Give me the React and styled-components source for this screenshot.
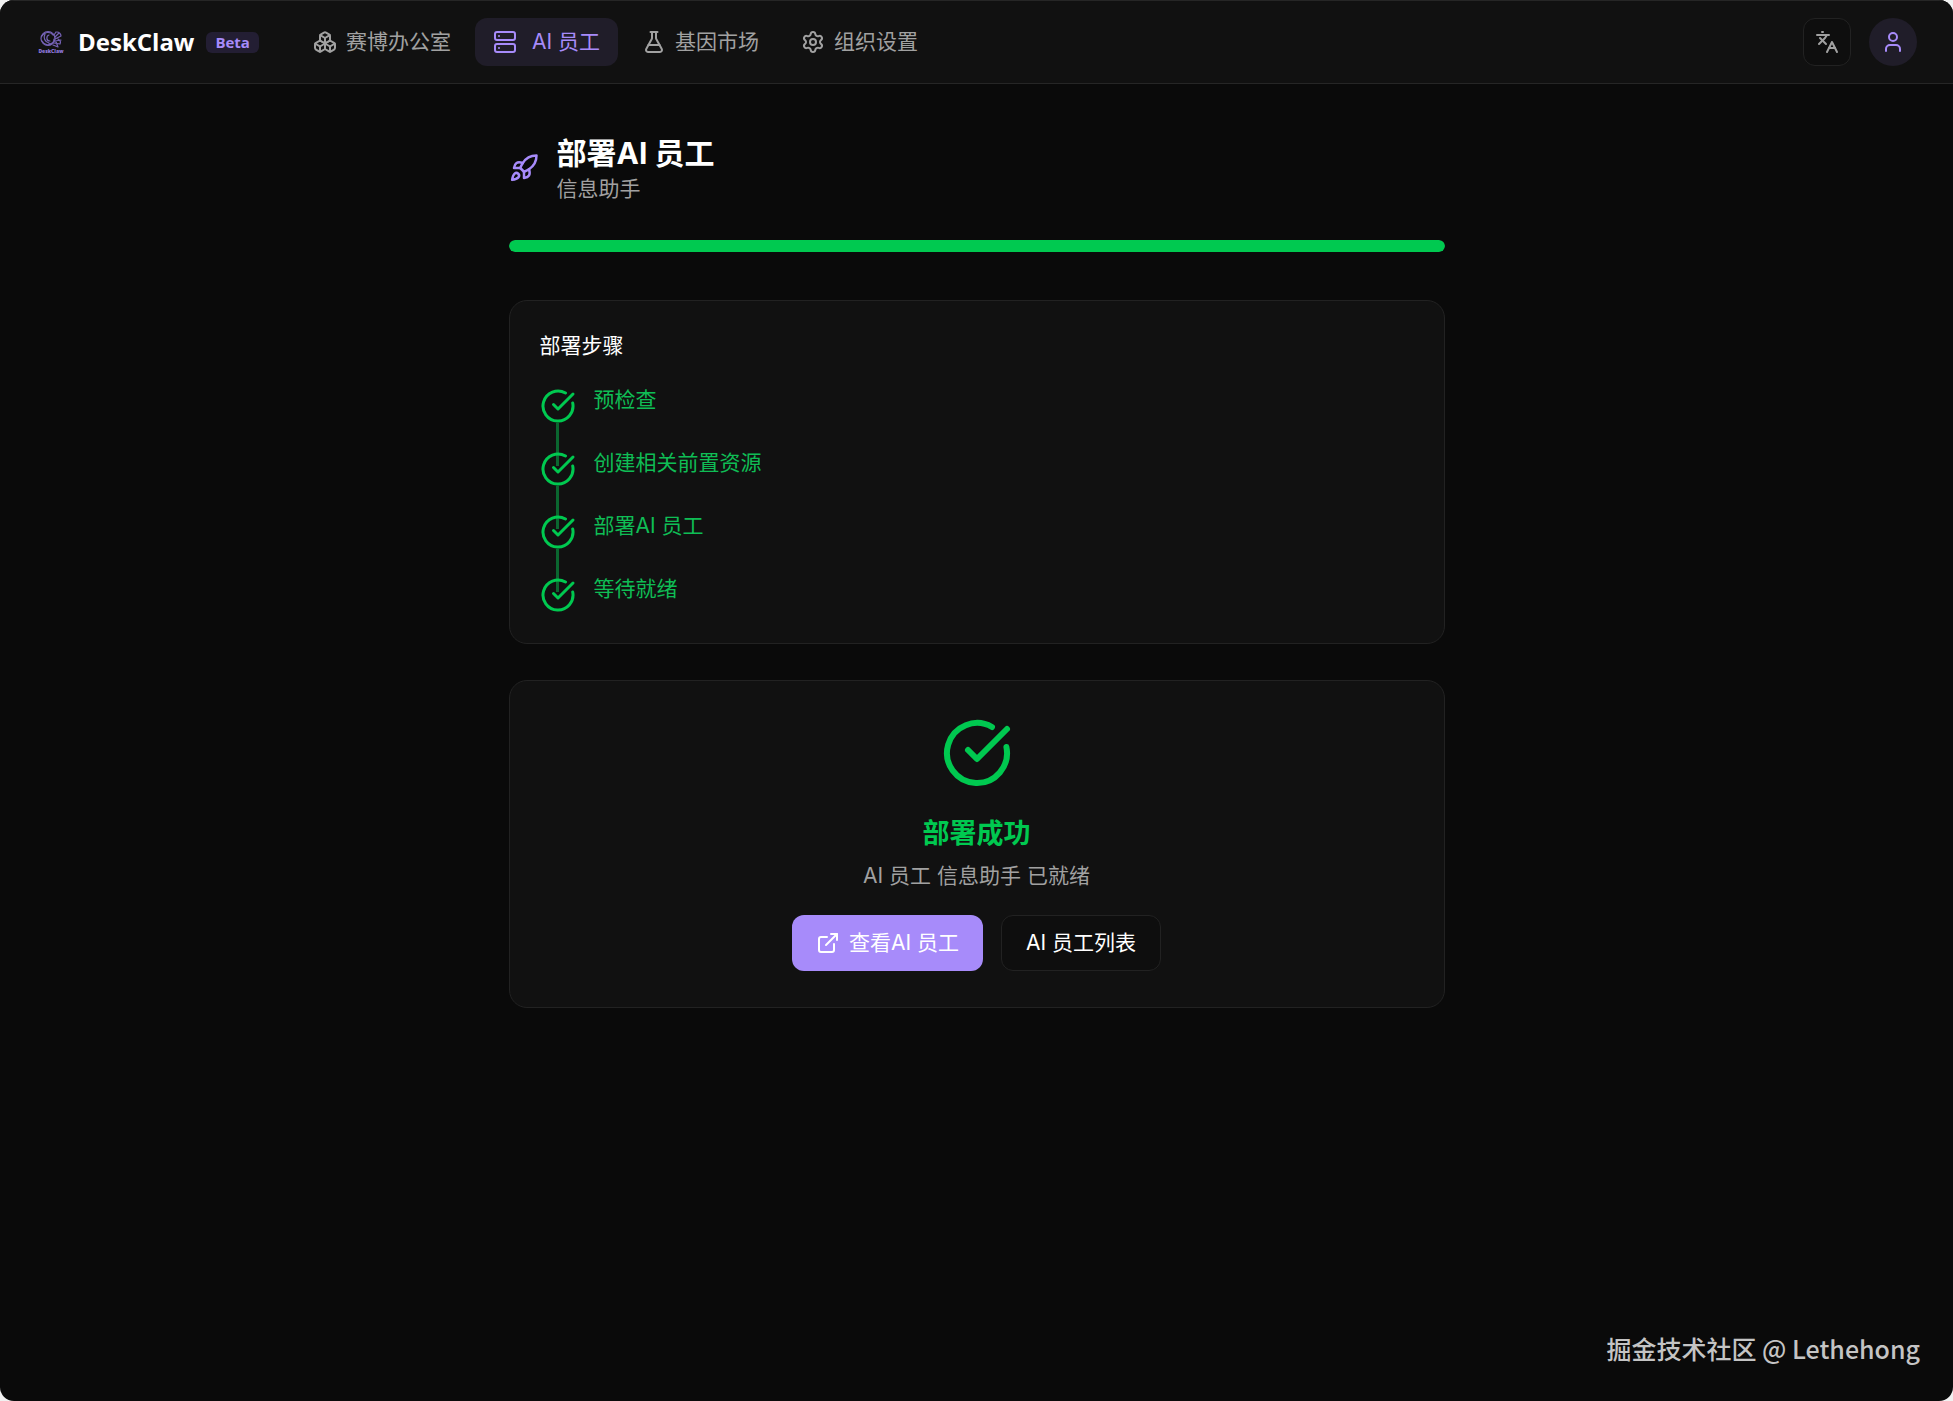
import styled, { createGlobalStyle } from "styled-components"
import {
    Boxes,
    CircleCheckBig,
    ExternalLink,
    FlaskConical,
    Languages,
    Rocket,
    Server,
    Settings,
    User,
} from "lucide-react"

const navItems = [
    { label: "赛博办公室", icon: Boxes },
    { label: "AI 员工", icon: Server, active: true },
    { label: "基因市场", icon: FlaskConical },
    { label: "组织设置", icon: Settings },
]

const steps = ["预检查", "创建相关前置资源", "部署AI 员工", "等待就绪"]

export default function App() {
    return (
        <>
            <GlobalStyle />
            <Window>
                <Header />
                <Main>
                    <PageHead />
                    <Progress role="progressbar" aria-label="部署进度" aria-valuenow={100}>
                        <ProgressFill style={{ width: "100%" }} />
                    </Progress>
                    <StepsCard />
                    <ResultCard />
                </Main>
                <Watermark>掘金技术社区 @ Lethehong</Watermark>
            </Window>
        </>
    )
}

function Header() {
    return (
        <HeaderBar>
            <Brand href="#">
                <LogoMark />
                <BrandName>DeskClaw</BrandName>
                <Badge>Beta</Badge>
            </Brand>
            <Nav>
                {navItems.map(({ label, icon: Icon, active }) => (
                    <NavLink key={label} href="#" $active={active}>
                        <Icon size={24} />
                        {label}
                    </NavLink>
                ))}
            </Nav>
            <HeaderActions>
                <LanguageButton type="button" aria-label="切换语言">
                    <Languages size={24} />
                </LanguageButton>
                <AvatarButton type="button" aria-label="个人中心">
                    <User size={24} />
                </AvatarButton>
            </HeaderActions>
        </HeaderBar>
    )
}

function LogoMark() {
    return (
        <svg width="30" height="30" viewBox="0 0 30 30" fill="none" stroke="#7562b5" strokeLinecap="round" aria-hidden="true">
            <circle cx="12" cy="11.5" r="7" strokeWidth="1.2" />
            <path
                d="M6 9c2-4 8-5 11-1M9 7c-2 4 0 8 4 9M13 8c-3 1-3 6 1 6M13 17c3 0 5-2 5-5M6 14c2 4 7 5 10 2.5"
                strokeWidth="1.2"
            />
            <path
                d="M18 8l2-3M19 10l4-4M19 12l6-3M19 14l6-1M18 16l6 1M17 18l5 2M21 5c2 0 4 2 4 4M22 12c2 1 3 3 2 5M20 15l2 5"
                strokeWidth="1.2"
            />
            <text x="15" y="26" textAnchor="middle" fontSize="5" fontWeight="800" fill="#8f78dc" stroke="none">
                DeskClaw
            </text>
        </svg>
    )
}

function PageHead() {
    return (
        <PageHeadRow>
            <Rocket size={30} color="#a78bfa" />
            <div>
                <PageTitle>部署AI 员工</PageTitle>
                <Muted>信息助手</Muted>
            </div>
        </PageHeadRow>
    )
}

function StepsCard() {
    return (
        <StepsPanel>
            <StepsTitle>部署步骤</StepsTitle>
            <StepList>
                {steps.map((step) => (
                    <Step key={step}>
                        <StepIcon size={36} />
                        <span>{step}</span>
                    </Step>
                ))}
            </StepList>
        </StepsPanel>
    )
}

function ResultCard() {
    return (
        <ResultPanel>
            <CircleCheckBig size={72} color="#00c950" />
            <ResultTitle>部署成功</ResultTitle>
            <Muted>AI 员工 信息助手 已就绪</Muted>
            <ButtonRow>
                <Button type="button" $primary>
                    <ExternalLink size={24} />
                    查看AI 员工
                </Button>
                <Button type="button">AI 员工列表</Button>
            </ButtonRow>
        </ResultPanel>
    )
}

const GlobalStyle = createGlobalStyle`
    * {
        box-sizing: border-box;
    }

    body {
        margin: 0;
        background: #f1f1f1;
        color: #ffffff;
        font-family: Inter, "Noto Sans CJK SC", sans-serif;
        font-size: 21px;
        line-height: 30px;
    }

    h1, h2, p, ul {
        margin: 0;
        padding: 0;
    }

    a {
        color: inherit;
        text-decoration: none;
    }

    button {
        font: inherit;
        cursor: pointer;
    }

    svg {
        display: block;
        flex-shrink: 0;
    }
`

const Window = styled.div`
    min-height: 100vh;
    display: flex;
    flex-direction: column;
    background: #0a0a0a;
    border-radius: 14px;
    overflow: hidden;
`

const HeaderBar = styled.header`
    display: flex;
    align-items: center;
    height: 84px;
    padding: 0 36px;
    background: #111111;
    border-top: 1px solid #262626;
    border-bottom: 1px solid #262626;
`

const Brand = styled.a`
    display: flex;
    align-items: center;
    gap: 12px;
    font-family: "Open Sans", sans-serif;
`

const BrandName = styled.span`
    font-size: 24px;
    font-weight: 700;
`

const Badge = styled.span`
    padding: 0 9px;
    border-radius: 6px;
    background: #231e33;
    color: #a78bfa;
    font-size: 15px;
    font-weight: 700;
    line-height: 21px;
`

const Nav = styled.nav`
    display: flex;
    gap: 6px;
    margin-left: 36px;
`

const NavLink = styled.a`
    display: flex;
    align-items: center;
    gap: ${({ $active }) => ($active ? 15 : 9)}px;
    height: 48px;
    padding: 0 18px;
    border-radius: 12px;
    background: ${({ $active }) => ($active ? "#201d29" : "transparent")};
    color: ${({ $active }) => ($active ? "#a78bfa" : "#a1a1a1")};
`

const HeaderActions = styled.div`
    display: flex;
    gap: 18px;
    margin-left: auto;
`

const IconButton = styled.button`
    display: flex;
    align-items: center;
    justify-content: center;
    width: 48px;
    height: 48px;
    padding: 0;
`

const LanguageButton = styled(IconButton)`
    border: 1px solid #222222;
    border-radius: 12px;
    background: #0e0e0e;
    color: #a1a1a1;
`

const AvatarButton = styled(IconButton)`
    border: none;
    border-radius: 50%;
    background: #201d29;
    color: #a78bfa;
`

const Main = styled.main`
    width: 100%;
    max-width: 936px;
    margin: 0 auto;
    padding: 48px 0;
`

const PageHeadRow = styled.div`
    display: flex;
    align-items: center;
    gap: 18px;
    margin-bottom: 36px;
`

const PageTitle = styled.h1`
    font-size: 30px;
    font-weight: 700;
    line-height: 42px;
`

const Muted = styled.p`
    color: #a1a1a1;
`

const Progress = styled.div`
    height: 12px;
    margin-bottom: 48px;
    border-radius: 6px;
    background: #262626;
    overflow: hidden;
`

const ProgressFill = styled.div`
    height: 100%;
    border-radius: 6px;
    background: #00c950;
`

const Card = styled.section`
    border: 1px solid #222222;
    border-radius: 18px;
    background: #111111;
`

const StepsPanel = styled(Card)`
    padding: 30px;
    margin-bottom: 36px;
`

const StepsTitle = styled.h2`
    margin-bottom: 24px;
    font-size: 21px;
    font-weight: 400;
`

const StepList = styled.ul`
    display: flex;
    flex-direction: column;
    gap: 24px;
    list-style: none;
`

const Step = styled.li`
    position: relative;
    display: flex;
    align-items: flex-start;
    gap: 18px;
    color: #0fbd55;

    /* connector down to the next step */
    &:not(:last-child)::before {
        content: "";
        position: absolute;
        top: 38px;
        left: 16px;
        width: 3px;
        height: 43px;
        background: #0b6730;
    }
`

const StepIcon = styled(CircleCheckBig)`
    margin-top: 3px;
    color: #00c950;
`

const ResultPanel = styled(Card)`
    display: flex;
    flex-direction: column;
    align-items: center;
    padding: 36px;
`

const ResultTitle = styled.h2`
    margin: 24px 0 6px;
    color: #00c950;
    font-size: 27px;
    font-weight: 700;
    line-height: 42px;
`

const ButtonRow = styled.div`
    display: flex;
    gap: 18px;
    margin-top: 24px;
`

const Button = styled.button`
    display: flex;
    align-items: center;
    gap: 9px;
    height: 56px;
    padding: 0 24px;
    border: ${({ $primary }) => ($primary ? "none" : "1px solid #222222")};
    border-radius: 12px;
    background: ${({ $primary }) => ($primary ? "#a78bfa" : "#0e0e0e")};
    color: #ffffff;
`

const Watermark = styled.p`
    margin: auto 0 0;
    padding: 0 33px 35px;
    color: #c4c4c4;
    font-family: "Noto Sans CJK SC", sans-serif;
    font-size: 25px;
    font-weight: 500;
    line-height: 36px;
    text-align: right;
`
